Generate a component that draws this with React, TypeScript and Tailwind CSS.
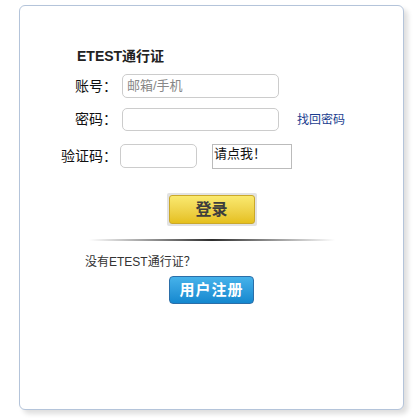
import React from 'react';

const cjk = { fontFamily: '"Liberation Sans", "Noto Sans CJK SC", sans-serif' };

export default function App() {
  return (
    <div className="w-[413px] h-[418px] bg-white pt-[5px] pl-[19px]" style={cjk}>
      <div className="w-[385px] h-[405px] rounded-[6px] border border-[#b4c4da] bg-white shadow-[4px_4px_5px_rgba(0,0,0,0.13)]">
        <div className="mt-[41px] pl-[57px] text-[14px] leading-[18px] font-bold text-[#222]">ETEST通行证</div>

        {/* account */}
        <div className="mt-[9px] flex items-center pl-[39px]">
          <span className="w-[58px] text-right text-[14px] text-[#111]">账号：</span>
          <div className="ml-[5px] flex h-[24px] w-[157px] items-center rounded-[5px] border border-[#cccccc] pl-[4px] text-[13px] text-[#888]">
            邮箱/手机
          </div>
        </div>

        {/* password */}
        <div className="mt-[10px] flex items-center pl-[39px]">
          <span className="w-[58px] text-right text-[14px] text-[#111]">密码：</span>
          <div className="ml-[5px] h-[23px] w-[157px] rounded-[5px] border border-[#cccccc]" />
          <a className="ml-[18px] text-[12px] text-[#1a3d8f]">找回密码</a>
        </div>

        {/* captcha */}
        <div className="mt-[13px] flex items-start pl-[39px]">
          <span className="mt-[3px] w-[58px] text-right text-[14px] leading-[18px] text-[#111]">验证码：</span>
          <div className="ml-[3px] h-[24px] w-[77px] rounded-[5px] border border-[#cccccc]" />
          <div className="ml-[15px] h-[25px] w-[80px] border border-[#bbbbbb] pl-[1px] text-[13px] leading-[18px] text-[#111]">
            请点我！
          </div>
        </div>

        {/* login */}
        <div className="mt-[24px] flex justify-center">
          <div className="rounded-[2px] bg-[#e2e2e2] p-[2px]">
            <button className="flex h-[29px] w-[86px] items-center justify-center rounded-[3px] border border-[#caa82a] bg-gradient-to-b from-[#fae96e] to-[#e5c01a] text-[16px] font-bold text-[#3d3d3d]">
              登录
            </button>
          </div>
        </div>

        <div className="mx-auto mt-[13px] h-[2px] w-[246px] bg-gradient-to-r from-transparent via-[#2e2e2e] to-transparent" />

        <div className="mt-[13px] pl-[65px] text-[12px] leading-[16px] text-[#333]">没有ETEST通行证？</div>

        <div className="mt-[6px] flex justify-center">
          <button className="flex h-[28px] w-[85px] items-center justify-center rounded-[4px] border border-[#2b6ea8] bg-gradient-to-b from-[#45b2ea] to-[#1388cf] text-[15px] font-bold tracking-[1px] text-white">
            用户注册
          </button>
        </div>
      </div>
    </div>
  );
}
